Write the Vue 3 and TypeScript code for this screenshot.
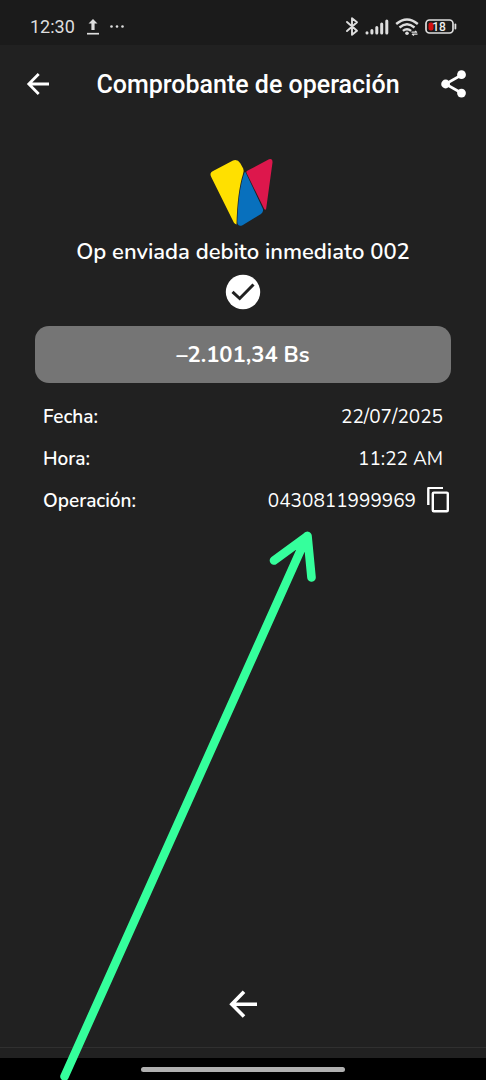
<script setup lang="ts">
interface Detail {
  label: string
  value: string
  copyable?: boolean
}

const title = 'Comprobante de operación'
const description = 'Op enviada debito inmediato 002'
const amount = '–2.101,34 Bs'
const details: Detail[] = [
  { label: 'Fecha:', value: '22/07/2025' },
  { label: 'Hora:', value: '11:22 AM' },
  { label: 'Operación:', value: '0430811999969', copyable: true },
]

function copyValue(value: string): void {
  void navigator.clipboard?.writeText(value)
}
</script>

<template>
  <div class="screen">
    <div class="status-bar">
      <div class="status-group">
        <span class="clock">12:30</span>
        <svg class="upload" width="14" height="18" viewBox="0 0 14 18" aria-hidden="true">
          <path d="M7 1 11.5 5.5H8.6V12H5.4V5.5H2.5z" fill="#dedede" />
          <path d="M1 15.7h12" stroke="#dedede" stroke-width="1.7" />
        </svg>
        <svg width="18" height="18" viewBox="0 0 18 18" fill="#dedede" aria-hidden="true">
          <circle cx="3.5" cy="8.5" r="1.3" /><circle cx="9" cy="8.5" r="1.3" /><circle cx="14.5" cy="8.5" r="1.3" />
        </svg>
      </div>
      <div class="status-group icons">
        <svg width="14" height="20" viewBox="0 0 14 20" fill="none" stroke="#dedede" stroke-width="1.9" stroke-linejoin="round" stroke-linecap="round" aria-hidden="true">
          <path d="M2 5 12 13.8 7 17.8V1.2L12 5.2 2 14" />
        </svg>
        <svg width="24" height="18" viewBox="0 0 24 18" stroke="#dedede" stroke-width="3" stroke-linecap="round" aria-hidden="true">
          <path d="M2 14.7v.3M6.9 12.5V15M11.8 9.5V15M16.7 6v9M21.8 3v12" />
        </svg>
        <svg width="24" height="18" viewBox="0 0 24 18" fill="none" stroke="#dedede" stroke-width="2.4" aria-hidden="true">
          <path d="M1.2 6Q12-3.200 22.8 6M4.5 9.5Q12 3.100 19.500 9.500M7.900 12.900Q12 9.500 16.100 12.900" />
          <circle cx="12" cy="15.3" r="1.8" fill="#dedede" stroke="none" />
          <path d="M16.5 14.2h5M17.500 16.200h5M20 13l2 1.500M19 17.500l-2-1.500" stroke-width="1.2" />
        </svg>
        <svg width="32" height="18" viewBox="0 0 32 18" aria-hidden="true">
          <rect x="1" y="2" width="27" height="13" rx="3.5" fill="none" stroke="#dedede" stroke-width="1.7" />
          <path d="M30.4 6.500v4" stroke="#dedede" stroke-width="1.8" stroke-linecap="round" />
          <rect x="3.5" y="4.500" width="5" height="8" rx="2" fill="#d41111" />
          <text x="14" y="13" text-anchor="middle" class="battery-level">18</text>
        </svg>
      </div>
    </div>

    <header class="app-bar">
      <button type="button" class="icon-button" aria-label="Volver">
        <svg width="24" height="24" viewBox="0 0 24 24" fill="none" stroke="#fff" stroke-width="2.8" aria-hidden="true">
          <path d="M12.7 2 2.8 12l9.9 10M3.2 12H23" />
        </svg>
      </button>
      <h1>{{ title }}</h1>
      <button type="button" class="icon-button" aria-label="Compartir">
        <svg width="26" height="28" viewBox="0 0 26 28" aria-hidden="true">
          <path d="M20.500 5 4.500 14l16 9" fill="none" stroke="#fff" stroke-width="2.6" />
          <g fill="#fff"><circle cx="20.5" cy="4.7" r="4.4" /><circle cx="4.6" cy="14" r="4.4" /><circle cx="20.5" cy="23.1" r="4.4" /></g>
        </svg>
      </button>
    </header>

    <main class="receipt">
      <svg class="logo" width="68" height="70" viewBox="0 0 68 70" aria-hidden="true">
        <path d="M3.6 13.2 24 2.4Q28.5.8 31.3 5.2L34.2 10.5Q35.2 12.5 34 16 28.3 34.5 27.5 66.5 25.8 66.2 24.8 64.5L2.1 18.7Q.3 15 3.6 13.2Z" fill="#ffe000" />
        <path d="M35.3 15Q36 13 37 15.2L53.700 50.500Q55 53.600 52 56L33.500 67.200Q28.700 69.100 28.300 64 29.200 32.500 35.300 15Z" fill="#0870bd" />
        <path d="M38.300 12.700 60 1.300Q63.700.3 63.500 4.500L57.200 50.500Q56.500 53.200 55 50.500L37.700 15.200Q36.800 13.500 38.300 12.700Z" fill="#dd174c" />
      </svg>
      <h2>{{ description }}</h2>
      <svg class="check" width="36" height="36" viewBox="0 0 36 36" role="img" aria-label="Operación exitosa">
        <circle cx="18" cy="18" r="17.2" fill="#fff" />
        <path d="m7.5 17.8 7.2 6.7L28.5 10.500" fill="none" stroke="#212121" stroke-width="3" />
      </svg>
      <div class="amount">{{ amount }}</div>
      <dl class="details">
        <div v-for="item in details" :key="item.label" class="detail">
          <dt>{{ item.label }}</dt>
          <dd :class="{ copyable: item.copyable }">
            {{ item.value }}
            <button v-if="item.copyable" type="button" class="icon-button" aria-label="Copiar número de operación" @click="copyValue(item.value)">
              <svg width="22" height="28" viewBox="0 0 22 28" fill="none" stroke="#fff" stroke-width="2.4" stroke-linejoin="round" aria-hidden="true">
                <path d="M1.3 18V1.800Q1.300.7 2.400.700H16" />
                <rect x="5.8" y="5.6" width="15" height="18.6" rx="1" />
              </svg>
            </button>
          </dd>
        </div>
      </dl>
    </main>

    <nav class="bottom-bar">
      <button type="button" class="icon-button" aria-label="Regresar">
        <svg width="28" height="28" viewBox="0 0 28 28" fill="none" stroke="#fff" stroke-width="3.6" aria-hidden="true">
          <path d="M15 1.800 2.800 14.200 15 26.600M3 14.200h25" />
        </svg>
      </button>
    </nav>
    <div class="divider"></div>
    <div class="gesture-area"><span class="gesture-handle"></span></div>

    <svg class="pointer" viewBox="0 0 486 1080" preserveAspectRatio="xMidYMin meet" fill="none" stroke="#35ff9c" stroke-width="8.6" stroke-linecap="round" stroke-linejoin="round" aria-hidden="true">
      <path d="M64.5 1076.5 307 536M274 560.5 307.5 536 311.5 577.5" />
    </svg>
  </div>
</template>

<style>
body {
  margin: 0;
  background: #212121;
}
</style>

<style scoped>
.screen {
  position: relative;
  display: flex;
  flex-direction: column;
  min-height: 100vh;
  overflow: hidden;
  background: #212121;
  color: #fff;
  font-family: Nunito, "Noto Sans", sans-serif;
}

.status-bar {
  display: flex;
  align-items: center;
  justify-content: space-between;
  box-sizing: border-box;
  height: 45px;
  padding: 8px 29px 0 30px;
  background: #1b1b1b;
  color: #dedede;
}

.status-group {
  display: flex;
  align-items: center;
  gap: 8px;
}

.status-group.icons {
  gap: 6px;
}

.clock {
  font: 400 18px/24px Roboto, sans-serif;
}

.upload {
  margin-left: 3px;
}

.battery-level {
  fill: #eee;
  font: 500 12px Roboto, sans-serif;
}

.app-bar {
  display: flex;
  align-items: center;
  justify-content: space-between;
  height: 78px;
  padding: 0 19px 0 26px;
}

.icon-button {
  display: flex;
  padding: 0;
  border: 0;
  background: none;
  color: inherit;
  cursor: pointer;
}

h1 {
  margin: 0;
  padding: 2px 0 0 5px;
  font: 500 25px/32px Roboto, sans-serif;
}

.receipt {
  display: flex;
  flex: 1;
  flex-direction: column;
  align-items: center;
  padding: 35px 35px 0;
}

h2 {
  margin: 9px 0 7px;
  font-size: 22px;
  font-weight: 600;
  line-height: 30px;
}

.amount {
  box-sizing: border-box;
  width: 100%;
  margin-top: 16px;
  padding: 14px 13px 13px;
  border-radius: 14px;
  background: #757575;
  font-size: 22px;
  font-weight: 700;
  line-height: 30px;
  text-align: center;
}

.details {
  align-self: stretch;
  margin: 13px 0 0;
  padding: 0 8px;
}

.detail {
  display: flex;
  align-items: center;
  justify-content: space-between;
  height: 42px;
  font-size: 19px;
}

dt {
  font-weight: 600;
}

dd {
  display: flex;
  align-items: center;
  gap: 11px;
  margin: 0;
  font-weight: 400;
}

dd.copyable {
  margin-right: -6px;
}

.bottom-bar {
  display: flex;
  justify-content: center;
  padding-bottom: 29px;
}

.divider {
  height: 10px;
  border-top: 1px solid #303030;
}

.gesture-area {
  display: flex;
  align-items: center;
  justify-content: center;
  height: 22px;
  background: #000;
}

.gesture-handle {
  width: 42%;
  height: 5px;
  border-radius: 3px;
  background: #b0b0b0;
}

.pointer {
  position: absolute;
  top: 0;
  left: 0;
  width: 100%;
  height: 100%;
  pointer-events: none;
}
</style>
